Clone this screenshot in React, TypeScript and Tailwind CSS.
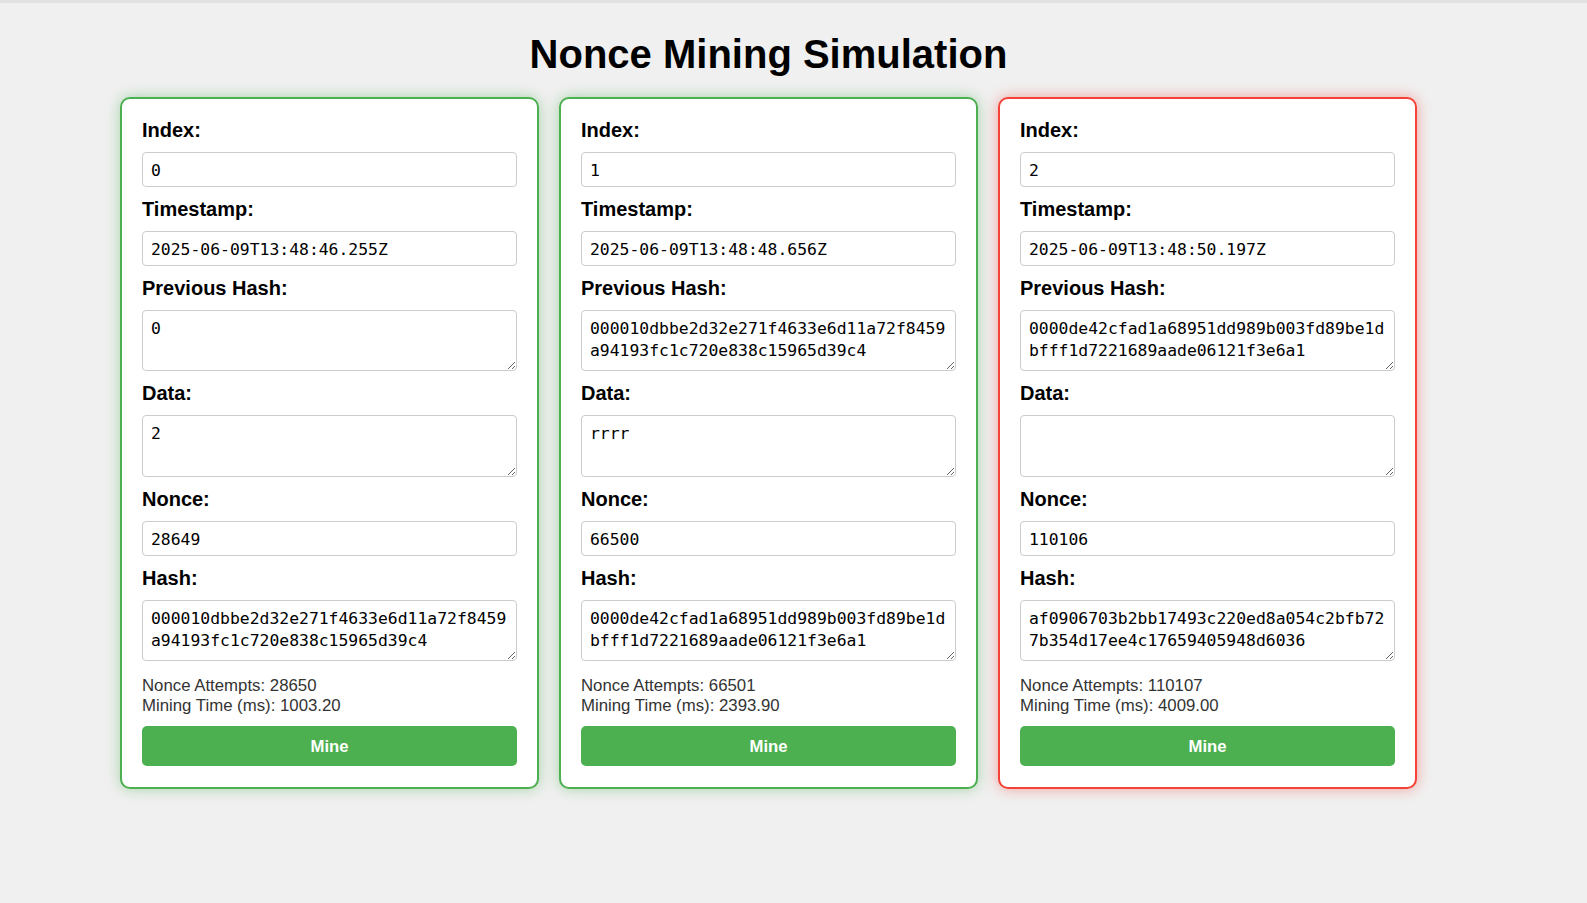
type Block = {
  index: string;
  timestamp: string;
  previousHash: string;
  data: string;
  nonce: string;
  hash: string;
  attempts: string;
  time: string;
  valid: boolean;
};

const blocks: Block[] = [
  {
    index: "0",
    timestamp: "2025-06-09T13:48:46.255Z",
    previousHash: "0",
    data: "2",
    nonce: "28649",
    hash: "000010dbbe2d32e271f4633e6d11a72f8459a94193fc1c720e838c15965d39c4",
    attempts: "28650",
    time: "1003.20",
    valid: true,
  },
  {
    index: "1",
    timestamp: "2025-06-09T13:48:48.656Z",
    previousHash: "000010dbbe2d32e271f4633e6d11a72f8459a94193fc1c720e838c15965d39c4",
    data: "rrrr",
    nonce: "66500",
    hash: "0000de42cfad1a68951dd989b003fd89be1dbfff1d7221689aade06121f3e6a1",
    attempts: "66501",
    time: "2393.90",
    valid: true,
  },
  {
    index: "2",
    timestamp: "2025-06-09T13:48:50.197Z",
    previousHash: "0000de42cfad1a68951dd989b003fd89be1dbfff1d7221689aade06121f3e6a1",
    data: "",
    nonce: "110106",
    hash: "af0906703b2bb17493c220ed8a054c2bfb727b354d17ee4c17659405948d6036",
    attempts: "110107",
    time: "4009.00",
    valid: false,
  },
];

const labelCls = "block text-[20px] font-bold leading-[22px] mb-[11px] text-black";
const fieldCls =
  "block w-full bg-white border border-[#ccc] rounded-[4px] px-[8px] text-[16.4px] text-black font-['DejaVu_Sans_Mono',monospace] outline-none";

function Field({ label, value }: { label: string; value: string }) {
  return (
    <>
      <label className={labelCls}>{label}</label>
      <input readOnly value={value} className={`${fieldCls} h-[35.4px] pt-[2px] mb-[11px]`} />
    </>
  );
}

function Area({ label, value, last }: { label: string; value: string; last?: boolean }) {
  return (
    <>
      <label className={labelCls}>{label}</label>
      <textarea
        readOnly
        rows={2}
        value={value}
        className={`${fieldCls} h-[61.2px] pt-[7px] leading-[22px] ${last ? "mb-[15.2px]" : "mb-[11px]"}`}
      />
    </>
  );
}

function BlockCard({ block }: { block: Block }) {
  return (
    <div
      className={
        block.valid
          ? "w-[419px] bg-white border-2 border-[#4caf50] rounded-[10px] px-[20px] pt-[20px] pb-[21px] shadow-[0_0_14px_rgba(76,175,80,0.45)]"
          : "w-[419px] bg-white border-2 border-[#f44336] rounded-[10px] px-[20px] pt-[20px] pb-[21px] shadow-[0_0_14px_rgba(244,67,54,0.45)]"
      }
    >
      <Field label="Index:" value={block.index} />
      <Field label="Timestamp:" value={block.timestamp} />
      <Area label="Previous Hash:" value={block.previousHash} />
      <Area label="Data:" value={block.data} />
      <Field label="Nonce:" value={block.nonce} />
      <Area label="Hash:" value={block.hash} last />
      <div className="text-[16.8px] leading-[20px] text-[#333]">
        <div>Nonce Attempts: {block.attempts}</div>
        <div>Mining Time (ms): {block.time}</div>
      </div>
      <button className="mt-[10px] w-full h-[39.7px] rounded-[5px] bg-[#4caf50] text-white text-[16.7px] font-bold">
        Mine
      </button>
    </div>
  );
}

export default function App() {
  return (
    <div className="min-h-screen bg-[#f0f0f0] border-t-[3px] border-[#e2e2e2] font-['Liberation_Sans',Arial,sans-serif]">
      <div className="w-[1537px]">
        <h1 className="mt-[27.5px] text-center text-[40px] leading-[46px] font-bold text-black">
          Nonce Mining Simulation
        </h1>
        <div className="mt-[20px] flex justify-center gap-[20px]">
          {blocks.map((b) => (
            <BlockCard key={b.index} block={b} />
          ))}
        </div>
      </div>
    </div>
  );
}
